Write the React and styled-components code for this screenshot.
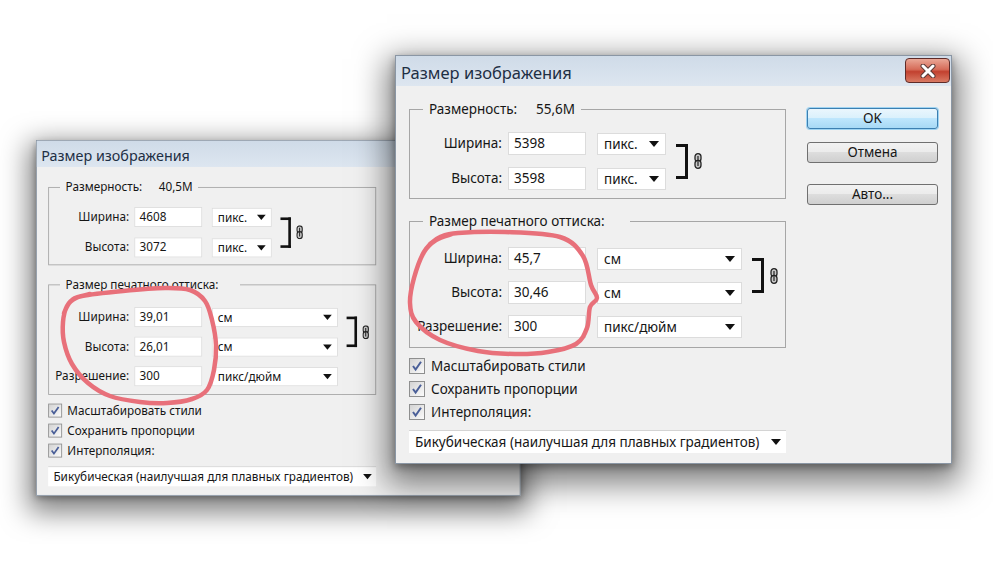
import React from "react";
import styled, { createGlobalStyle } from "styled-components";

const GlobalStyle = createGlobalStyle`
  html, body {
    margin: 0;
    padding: 0;
    background: #fff;
  }
  body {
    font-family: "Noto Sans", "Open Sans", sans-serif;
  }
`;

const Page = styled.div`
  position: relative;
  width: 993px;
  height: 582px;
  overflow: hidden;
  background: #fff;
`;

const Window = styled.div`
  position: absolute;
  left: ${(p) => p.$x}px;
  top: ${(p) => p.$y}px;
  z-index: ${(p) => p.$z};
  width: 557px;
  box-sizing: border-box;
  transform: scale(${(p) => p.$scale});
  transform-origin: 0 0;
  background: #f0f0f0;
  border: 1px solid #8a96a4;
  box-shadow: 0 12px 30px 8px rgba(0, 0, 0, 0.5), 0 3px 8px rgba(0, 0, 0, 0.35);
  font: 13.5px "Noto Sans", "Open Sans", sans-serif;
  color: #161616;
`;

const TitleBar = styled.div`
  height: 30px;
  display: flex;
  justify-content: space-between;
  align-items: flex-start;
  padding: 0 1px 0 5px;
  background: linear-gradient(#cfdbe8, #dde6f0);
`;

const Title = styled.div`
  font-size: 16.5px;
  line-height: 33px;
  color: #1e2f44;
`;

const CloseButton = styled.div`
  margin-top: 2px;
  width: 45px;
  height: 25px;
  box-sizing: border-box;
  border: 1px solid #5e2b28;
  border-radius: 4px;
  background: linear-gradient(#eaa796 0%, #d66c59 45%, #c2412f 55%, #d97a63 100%);
  display: flex;
  align-items: center;
  justify-content: center;
`;

const Body = styled.div`
  display: flex;
  gap: 21px;
  padding: 14px 13px 10px;
`;

const MainColumn = styled.div`
  width: 377px;
  display: flex;
  flex-direction: column;
`;

const Group = styled.fieldset`
  margin: ${(p) => p.$top}px 0 0;
  padding: ${(p) => p.$pt}px 0 ${(p) => p.$pb}px;
  border: 1px solid #a6a6a6;
  min-width: 0;
`;

const Legend = styled.legend`
  margin-left: 13px;
  padding: 0 ${(p) => p.$pr}px 0 6px;
  line-height: 18px;
  white-space: nowrap;
`;

const LegendValue = styled.span`
  margin-left: 19px;
`;

const FieldGrid = styled.div`
  display: grid;
  grid-template-columns: 98px 89px ${(p) => p.$sel}px auto;
  grid-auto-rows: 23px;
  row-gap: ${(p) => p.$gap}px;
`;

const FieldLabel = styled.div`
  text-align: right;
  padding-right: 6px;
  line-height: 23px;
  white-space: nowrap;
`;

const TextBox = styled.div`
  width: 78px;
  box-sizing: border-box;
  background: #fff;
  border: 1px solid #dcdcdc;
  padding-left: 5px;
  line-height: 21px;
`;

const Select = styled.div`
  margin-top: 1px;
  display: flex;
  align-items: center;
  justify-content: space-between;
  box-sizing: border-box;
  background: #fff;
  border: 1px solid #dcdcdc;
  padding: 0 6px;
`;

const Arrow = styled.span`
  width: 0;
  height: 0;
  border-left: 5px solid transparent;
  border-right: 5px solid transparent;
  border-top: 6px solid #111;
`;

const LinkMark = styled.div`
  grid-column: 4;
  grid-row: 1 / span 2;
  display: flex;
  align-items: center;
  gap: 6px;
  padding-left: 10px;
`;

const Bracket = styled.div`
  width: 12px;
  height: 35px;
  box-sizing: border-box;
  border: 3px solid #111;
  border-left: none;
`;

const CheckRow = styled.div`
  height: 23px;
  display: flex;
  align-items: center;
  gap: 6px;
`;

const CheckBox = styled.div`
  width: 16px;
  height: 16px;
  box-sizing: border-box;
  border: 1px solid #8e8f8f;
  background: linear-gradient(135deg, #d3d3d3, #fbfbfb);
  display: flex;
  align-items: center;
  justify-content: center;
`;

const Checks = styled.div`
  margin-top: 6px;
`;

const Combo = styled.div`
  margin-top: 7px;
  height: 23px;
  display: flex;
  align-items: center;
  justify-content: space-between;
  background: #fff;
  border-top: 1px solid #d4d4d4;
  padding: 0 5px 0 6px;
  box-sizing: border-box;
`;

const ButtonColumn = styled.div`
  width: 131px;
  padding-top: 8px;
  display: flex;
  flex-direction: column;
  visibility: ${(p) => (p.$hidden ? "hidden" : "visible")};
`;

const Button = styled.div`
  margin-top: ${(p) => p.$top}px;
  height: 21px;
  box-sizing: border-box;
  border: 1px solid ${(p) => (p.$primary ? "#3c7fb1" : "#707070")};
  border-radius: 3px;
  background: ${(p) =>
    p.$primary
      ? "linear-gradient(#eaf6fd 0%, #d9f0fc 50%, #bee6fd 50%, #a7d9f5 100%)"
      : "linear-gradient(#f2f2f2 0%, #ebebeb 50%, #dddddd 50%, #cfcfcf 100%)"};
  box-shadow: ${(p) => (p.$primary ? "0 0 0 1px #9fd4f2" : "none")};
  text-align: center;
  line-height: 19px;
`;

const Overlay = styled.svg`
  position: absolute;
  left: 0;
  top: 0;
  z-index: 5;
  pointer-events: none;
`;

function Chain() {
  return (
    <svg width="8" height="16" viewBox="0 0 8 16">
      <rect x="1" y="0.7" width="6" height="8" rx="3" fill="#c9c9c9" stroke="#222" strokeWidth="1.3" />
      <rect x="1" y="7.3" width="6" height="8" rx="3" fill="#c9c9c9" stroke="#222" strokeWidth="1.3" />
      <line x1="4" y1="3" x2="4" y2="13" stroke="#222" strokeWidth="1.2" />
    </svg>
  );
}

function Check() {
  return (
    <svg width="12" height="12" viewBox="0 0 12 12">
      <path d="M2 6 L4.6 9.5 L10 1.8" fill="none" stroke="#4a5f98" strokeWidth="2" />
    </svg>
  );
}

function CloseX() {
  return (
    <svg width="16" height="14" viewBox="0 0 16 14">
      <path d="M3 2 L13 12 M13 2 L3 12" stroke="#5a3a36" strokeWidth="5" strokeLinecap="round" />
      <path d="M3 2 L13 12 M13 2 L3 12" stroke="#fff" strokeWidth="3" strokeLinecap="round" />
    </svg>
  );
}

function Fields({ rows, sel, gap }) {
  return (
    <FieldGrid $sel={sel} $gap={gap}>
      {rows.map((r) => (
        <React.Fragment key={r.label}>
          <FieldLabel>{r.label}</FieldLabel>
          <TextBox>{r.value}</TextBox>
          <Select>
            {r.unit}
            <Arrow />
          </Select>
        </React.Fragment>
      ))}
      <LinkMark>
        <Bracket />
        <Chain />
      </LinkMark>
    </FieldGrid>
  );
}

function ImageSizeDialog({ x, y, z, scale, covered, data }) {
  return (
    <Window $x={x} $y={y} $z={z} $scale={scale}>
      <TitleBar>
        <Title>Размер изображения</Title>
        {!covered && (
          <CloseButton>
            <CloseX />
          </CloseButton>
        )}
      </TitleBar>
      <Body>
        <MainColumn>
          <Group $top={0} $pt={14} $pb={8}>
            <Legend $pr={6}>
              Размерность:<LegendValue>{data.size}</LegendValue>
            </Legend>
            <Fields
              sel={69}
              gap={12}
              rows={[
                { label: "Ширина:", value: data.px[0], unit: "пикс." },
                { label: "Высота:", value: data.px[1], unit: "пикс." },
              ]}
            />
          </Group>
          <Group $top={13} $pt={17} $pb={9}>
            <Legend $pr={25}>Размер печатного оттиска:</Legend>
            <Fields
              sel={145}
              gap={11}
              rows={[
                { label: "Ширина:", value: data.cm[0], unit: "см" },
                { label: "Высота:", value: data.cm[1], unit: "см" },
                { label: "Разрешение:", value: "300", unit: "пикс/дюйм" },
              ]}
            />
          </Group>
          <Checks>
            {["Масштабировать стили", "Сохранить пропорции", "Интерполяция:"].map((t) => (
              <CheckRow key={t}>
                <CheckBox>
                  <Check />
                </CheckBox>
                {t}
              </CheckRow>
            ))}
          </Checks>
          <Combo>
            Бикубическая (наилучшая для плавных градиентов)
            <Arrow />
          </Combo>
        </MainColumn>
        <ButtonColumn $hidden={covered}>
          <Button $primary $top={0}>OK</Button>
          <Button $top={13}>Отмена</Button>
          <Button $top={21}>Авто...</Button>
        </ButtonColumn>
      </Body>
    </Window>
  );
}

function smooth(pts) {
  let d = `M ${pts[0][0]} ${pts[0][1]}`;
  for (let i = 0; i < pts.length - 1; i++) {
    const p0 = pts[i - 1] || pts[i];
    const p1 = pts[i];
    const p2 = pts[i + 1];
    const p3 = pts[i + 2] || p2;
    const c1 = [p1[0] + (p2[0] - p0[0]) / 6, p1[1] + (p2[1] - p0[1]) / 6];
    const c2 = [p2[0] - (p3[0] - p1[0]) / 6, p2[1] - (p3[1] - p1[1]) / 6];
    d += ` C ${c1[0]} ${c1[1]} ${c2[0]} ${c2[1]} ${p2[0]} ${p2[1]}`;
  }
  return d;
}

const leftLoop = [
  [64, 313], [70, 302], [82, 296], [123, 291], [165, 288], [190, 290], [205, 301],
  [212, 320], [216, 345], [214, 370], [207, 390], [192, 399], [167, 403], [140, 402],
  [110, 396], [88, 383], [72, 364], [64, 342], [63, 322], [67, 306], [76, 298], [90, 294],
];

const rightLoop = [
  [430, 244], [440, 237], [458, 233], [505, 232], [560, 237], [583, 256], [591, 285],
  [597, 298], [590, 307], [587, 328], [576, 344], [548, 352], [515, 354], [478, 351],
  [440, 340], [416, 322], [410, 303], [414, 278], [424, 252], [436, 240], [452, 234],
];

export default function App() {
  return (
    <Page>
      <GlobalStyle />
      <ImageSizeDialog
        x={36}
        y={140}
        z={1}
        scale={0.87}
        covered
        data={{ size: "40,5M", px: ["4608", "3072"], cm: ["39,01", "26,01"] }}
      />
      <ImageSizeDialog
        x={395}
        y={55}
        z={2}
        scale={1}
        data={{ size: "55,6M", px: ["5398", "3598"], cm: ["45,7", "30,46"] }}
      />
      <Overlay width="993" height="582" viewBox="0 0 993 582">
        <path d={smooth(leftLoop)} fill="none" stroke="#e8707a" strokeWidth="4.5" strokeLinecap="round" strokeLinejoin="round" />
        <path d={smooth(rightLoop)} fill="none" stroke="#e8707a" strokeWidth="4.5" strokeLinecap="round" strokeLinejoin="round" />
      </Overlay>
    </Page>
  );
}
